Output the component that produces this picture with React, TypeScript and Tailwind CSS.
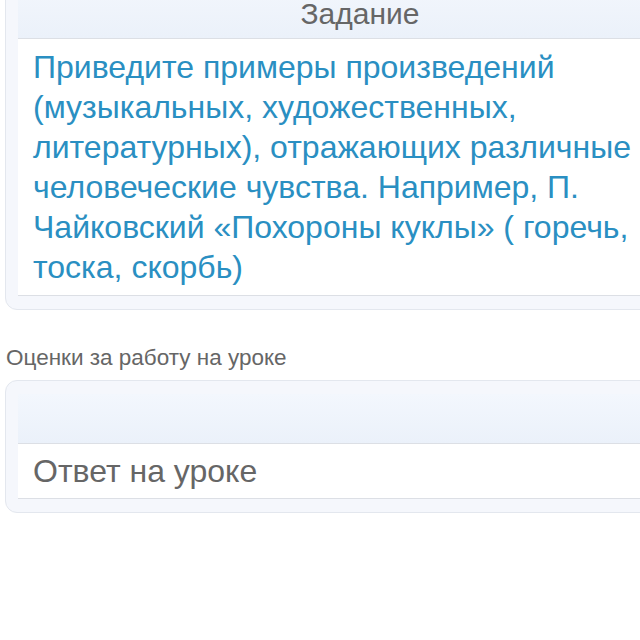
import React from "react";

export default function App() {
  return (
    <div className="w-[640px] h-[640px] overflow-hidden bg-white" style={{ fontFamily: '"Liberation Sans", Arial, sans-serif' }}>
      <div className="w-[760px]">
        <div className="ml-[5px] mt-[-25px] w-[710px] rounded-[12px] border border-[#e3e7ee] bg-[#f5f7fc] px-[12px] py-[13px]">
          <div className="flex h-[50px] items-center justify-center border-b border-[#dcdfe5] bg-gradient-to-b from-[#f2f6fc] to-[#ebf1fa] text-[30px] text-[#666]">
            Задание
          </div>
          <div className="border-b border-[#dcdfe5] bg-white px-[15px] pt-[8px] pb-[8px]">
            <div className="w-[610px] text-[32px] leading-[40px] text-[#2a8fc2]">
              Приведите примеры произведений (музыкальных, художественных, литературных), отражающих различные человеческие чувства. Например, П. Чайковский «Похороны куклы» ( горечь, тоска, скорбь)
            </div>
          </div>
        </div>
        <div className="ml-[6px] mt-[35px] text-[22.5px] leading-[26px] text-[#666]">Оценки за работу на уроке</div>
        <div className="ml-[5px] mt-[9px] w-[710px] rounded-[12px] border border-[#e3e7ee] bg-[#f5f7fc] px-[12px] py-[13px]">
          <div className="h-[50px] border-b border-[#dcdfe5] bg-gradient-to-b from-[#f3f7fd] to-[#ebf1fa]"></div>
          <div className="flex h-[55px] items-center border-b border-[#dcdfe5] bg-white px-[15px] text-[32px] text-[#666]">
            Ответ на уроке
          </div>
        </div>
      </div>
    </div>
  );
}
